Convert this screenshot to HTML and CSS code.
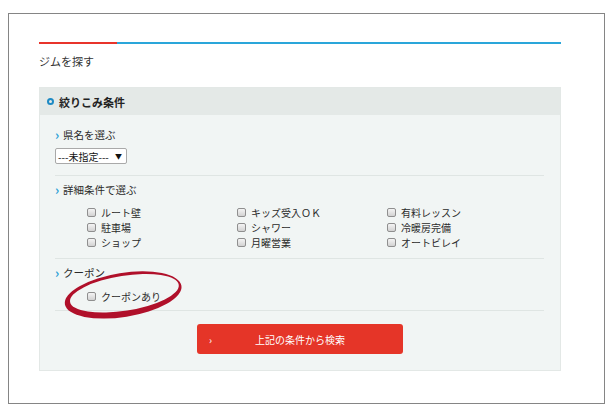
FILE: index.html
```html
<!DOCTYPE html>
<html lang="ja">
<head>
<meta charset="utf-8">
<link rel="stylesheet" href="styles.css">
</head>
<body>
<div class="frame">
  <div class="rule"><span class="rule-red"></span><span class="rule-blue"></span></div>
  <h1 class="page-title">ジムを探す</h1>
  <div class="panel">
    <div class="panel-head"><span class="ring"></span>絞りこみ条件</div>
    <div class="panel-body">
      <div class="section section-pref">
        <div class="sec-title"><span class="chev">›</span>県名を選ぶ</div>
        <div class="select"><span>---未指定---</span><span class="arrow">▼</span></div>
      </div>
      <div class="section section-detail">
        <div class="sec-title"><span class="chev">›</span>詳細条件で選ぶ</div>
        <div class="checks">
          <label class="check"><span class="cb"></span>ルート壁</label>
          <label class="check"><span class="cb"></span>キッズ受入ＯＫ</label>
          <label class="check"><span class="cb"></span>有料レッスン</label>
          <label class="check"><span class="cb"></span>駐車場</label>
          <label class="check"><span class="cb"></span>シャワー</label>
          <label class="check"><span class="cb"></span>冷暖房完備</label>
          <label class="check"><span class="cb"></span>ショップ</label>
          <label class="check"><span class="cb"></span>月曜営業</label>
          <label class="check"><span class="cb"></span>オートビレイ</label>
        </div>
      </div>
      <div class="section section-coupon">
        <div class="sec-title"><span class="chev">›</span>クーポン</div>
        <div class="checks coupon">
          <label class="check"><span class="cb"></span>クーポンあり</label>
        </div>
      </div>
      <div class="btn-row">
        <div class="btn"><span class="btn-chev">›</span><span class="btn-text">上記の条件から検索</span><span></span></div>
      </div>
    </div>
  </div>
  <svg class="scribble" width="150" height="70" viewBox="0 0 150 70">
    <g transform="rotate(-9 74 35)">
      <path fill="#b0102a" fill-rule="evenodd" d="M15,36 A59 22 0 1 0 133,36 A59 22 0 1 0 15,36 Z M20.5,34.5 A55 17.5 0 1 0 130.5,34.5 A55 17.5 0 1 0 20.5,34.5 Z"/>
    </g>
  </svg>
</div>
</body>
</html>
```
FILE: styles.css
```css
* { box-sizing: border-box; }
html, body { margin: 0; padding: 0; background: #fff; }
body {
  font-family: "Noto Sans CJK JP", "Liberation Sans", sans-serif;
  color: #333;
}
.frame {
  position: relative;
  margin: 13px 0 0 8px;
  width: 597px;
  height: 391px;
  border: 1px solid #858585;
  padding: 28px 43px 0 30px;
}
.rule { display: flex; height: 2px; }
.rule-red { width: 78px; background: #e8342b; }
.rule-blue { flex: 1; background: #2aa6da; }
.page-title {
  margin: 9px 0 0;
  font-size: 11px;
  font-weight: normal;
  line-height: 16px;
  color: #333;
}
.panel {
  margin-top: 18px;
  background: #f1f5f4;
  border: 1px solid #e3e8e6;
}
.panel-head {
  height: 27px;
  background: #e4e9e7;
  display: flex;
  align-items: center;
  padding-left: 7px;
  font-size: 11px;
  font-weight: bold;
  color: #222;
}
.ring {
  width: 7px;
  height: 7px;
  border: 2px solid #1e8ac4;
  border-radius: 50%;
  margin-right: 5px;
}
.panel-body { padding: 12px 16px 16px 15px; }
.section {
  border-bottom: 1px solid #dfe5e3;
  padding-bottom: 10px;
  margin-bottom: 6px;
}
.section-pref { padding-bottom: 11px; }
.section-detail { padding-bottom: 8px; }
.section-coupon { padding-bottom: 6px; }
.sec-title {
  display: flex;
  align-items: center;
  font-size: 10.5px;
  line-height: 16px;
  color: #2a2a2a;
}
.chev { color: #2a9fd6; font-size: 13px; font-weight: bold; width: 8px; line-height: 16px; }
.select {
  margin-top: 5px;
  width: 72px;
  height: 16px;
  background: #fff;
  border: 1px solid #a9a9a9;
  border-radius: 2px;
  display: flex;
  align-items: center;
  justify-content: space-between;
  padding: 0 4px 0 2px;
  font-size: 10px;
  color: #111;
}
.arrow { font-size: 7px; }
.checks {
  margin-top: 7px;
  padding-left: 32px;
  display: grid;
  grid-template-columns: repeat(3, 150px);
  grid-auto-rows: 15px;
}
.check {
  display: flex;
  align-items: center;
  font-size: 10px;
  color: #2a2a2a;
}
.cb {
  width: 9px;
  height: 9px;
  border: 1px solid #8f8f8f;
  border-radius: 2px;
  background: linear-gradient(#f4f4f4, #d2d2d2);
  margin-right: 5px;
}
.coupon { margin-top: 8px; }
.btn-row { padding: 7px 0 0 142px; }
.btn {
  width: 206px;
  height: 30px;
  background: #e53528;
  border-radius: 3px;
  display: grid;
  grid-template-columns: 1fr auto 1fr;
  align-items: center;
  color: #fff;
  font-size: 10px;
}
.btn-chev { padding-left: 12px; font-size: 10px; }
.scribble {
  position: absolute;
  left: 40px;
  top: 245px;
}
```
